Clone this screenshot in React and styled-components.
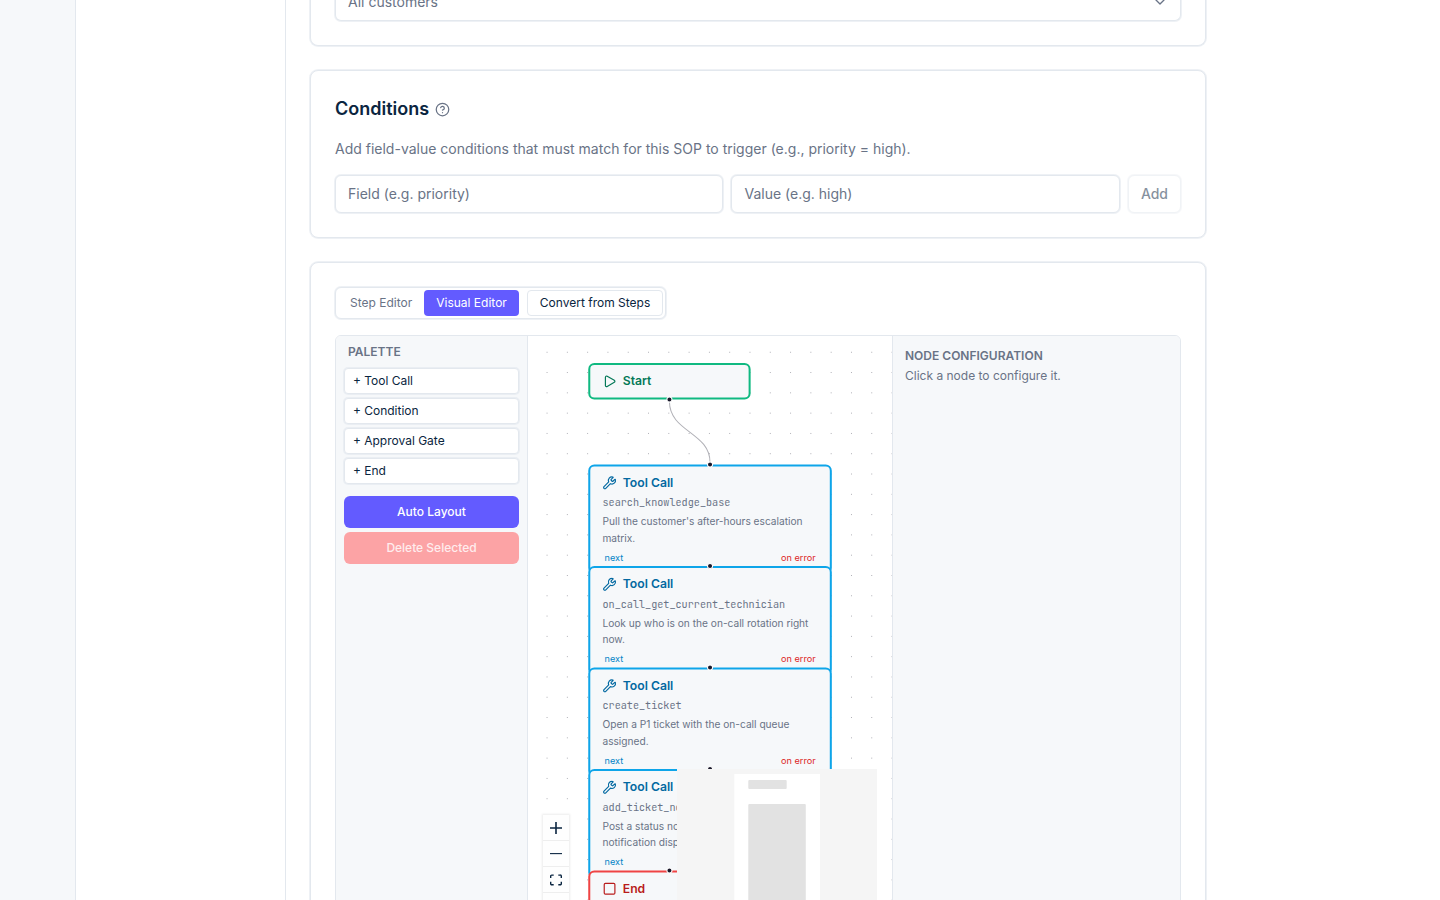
import React from "react";
import styled, { createGlobalStyle } from "styled-components";
import { ChevronDown, CircleHelp, Play, Square, Wrench } from "lucide-react";

const Global = createGlobalStyle`
  * { box-sizing: border-box; }
  html, body { margin: 0; height: 100%; overflow: hidden; }
  body {
    background: #fff;
    color: #0a2540;
    font-family: Inter, "Liberation Sans", sans-serif;
    font-size: 14px;
    line-height: 20px;
  }
`;

const Page = styled.div`
  display: flex;
  height: 900px;
  overflow: hidden;
`;

const Rail = styled.aside`
  flex: none;
  width: 76px;
  background: #f6f8fa;
  border-right: 1px solid #e3e8ee;
`;

const SubNav = styled.nav`
  flex: none;
  width: 210px;
  border-right: 1px solid #e3e8ee;
`;

const Main = styled.main`
  display: flex;
  flex-direction: column;
  justify-content: flex-start;
  gap: 24px;
  width: 944px;
  height: 900px;
  padding: 0 24px;
  overflow: hidden;
`;

const ring = "box-shadow: 0 0 0 1px rgba(227, 232, 238, 0.6);";

const Card = styled.section`
  flex: none;
  height: ${(p) => p.$height}px;
  padding: 24px;
  background: #fff;
  border: 1px solid #e3e8ee;
  border-radius: 8px;
  ${ring}
`;

const AudienceCard = styled(Card)`
  display: flex;
  flex-direction: column;
  justify-content: flex-end;
  height: 46px;
  border-top: 0;
  border-radius: 0 0 8px 8px;
  padding-top: 0;
`;

const control = `
  background: #fff;
  border: 1px solid #e3e8ee;
  border-radius: 6px;
  ${ring}
`;

const Select = styled.div`
  ${control}
  display: flex;
  align-items: flex-end;
  justify-content: space-between;
  height: 21px;
  padding: 0 12px 8px;
  border-top: 0;
  border-radius: 0 0 6px 6px;
  color: #697386;
  svg { display: block; margin: 0 0 2px; }
`;

const Title = styled.h2`
  display: flex;
  align-items: center;
  gap: 6px;
  margin: 0 0 16px;
  font-size: 18px;
  line-height: 28px;
  font-weight: 600;
  svg { color: #697386; }
`;

const Hint = styled.p`
  margin: 0 0 16px;
  color: #697386;
`;

const FieldRow = styled.div`
  display: flex;
  gap: 8px;
`;

const Input = styled.div`
  ${control}
  flex: 1;
  height: 38px;
  padding: 8px 12px;
  color: #697386;
`;

const AddButton = styled.button`
  ${control}
  width: 53.1px;
  height: 38px;
  padding: 0;
  color: #0a2540;
  font: 500 14px/20px Inter, sans-serif;
  opacity: 0.5;
`;

const Tabs = styled.div`
  ${control}
  display: inline-flex;
  height: 32px;
  padding: 2px;
  margin-bottom: 16px;
`;

const Tab = styled.button`
  height: 26px;
  padding: 0 12px;
  border: 0;
  border-radius: 4px;
  background: ${(p) => (p.$active ? "#635bff" : "transparent")};
  color: ${(p) => (p.$active ? "#fff" : "#697386")};
  font: 400 12px/16px Inter, sans-serif;
`;

const ConvertButton = styled(Tab)`
  margin-left: 8px;
  border: 1px solid #e3e8ee;
  color: #0a2540;
`;

const Editor = styled.div`
  display: flex;
  width: 846px;
  height: 620px;
  border: 1px solid #e3e8ee;
  border-radius: 6px;
  overflow: hidden;
`;

const Palette = styled.div`
  display: flex;
  flex-direction: column;
  gap: 4px;
  width: 192px;
  padding: 8px;
  background: #f6f8fa;
  border-right: 1px solid #e3e8ee;
`;

const PanelTitle = styled.div`
  color: #697386;
  font-size: 12px;
  line-height: 16px;
  font-weight: 600;
`;

const PaletteTitle = styled(PanelTitle)`
  padding: 0 4px;
  margin-bottom: 4px;
`;

const PaletteItem = styled.button`
  ${control}
  height: 26px;
  padding: 0 7.9px;
  border-radius: 4px;
  color: #0a2540;
  text-align: left;
  font: 400 12px/16px Inter, sans-serif;
`;

const ActionButton = styled.button`
  height: 32px;
  margin-top: ${(p) => (p.$danger ? 0 : 8)}px;
  border: 0;
  border-radius: 6px;
  background: ${(p) => (p.$danger ? "#fca3a5" : "#635bff")};
  color: ${(p) => (p.$danger ? "#ffedee" : "#fff")};
  font: 500 12px/16px Inter, sans-serif;
`;

const Canvas = styled.div`
  position: relative;
  flex: 1;
  overflow: hidden;
  background: #fff;
`;

const Dots = styled.svg`
  position: absolute;
  inset: 0;
  width: 100%;
  height: 100%;
`;

const Viewport = styled.div`
  position: absolute;
  left: 0;
  top: 0;
  transform: translate(60.25px, 27.05px) scale(1.0149);
  transform-origin: 0 0;
`;

const Edge = styled.svg`
  position: absolute;
  left: 0;
  top: 0;
  overflow: visible;
`;

const tones = {
  start: { line: "#10b981", text: "#047857" },
  tool: { line: "#0ea5e9", text: "#0369a1" },
  end: { line: "#ef4444", text: "#b91c1c" },
};

const Node = styled.div`
  position: absolute;
  left: 0;
  top: ${(p) => p.$y}px;
  width: ${(p) => (p.$tone === "tool" ? 240 : 160)}px;
  padding: 8px 12px;
  background: #f6f8fa;
  border: 2px solid ${(p) => tones[p.$tone].line};
  border-radius: 6px;
`;

const NodeHead = styled.div`
  display: flex;
  align-items: center;
  gap: 6px;
  color: ${(p) => tones[p.$tone].text};
  font-size: 12px;
  line-height: 16px;
  font-weight: 600;
`;

const ToolName = styled.div`
  margin-top: 4px;
  color: #697386;
  font: 400 10px/16px "JetBrains Mono", "DejaVu Sans Mono", monospace;
`;

const Note = styled.div`
  margin-top: 2px;
  color: #697386;
  font-size: 10px;
  line-height: 16.25px;
`;

const Outputs = styled.div`
  display: flex;
  justify-content: space-between;
  margin-top: 4px;
  padding: 0 2px;
  color: #0284c7;
  font-size: 9px;
  line-height: 13.5px;
  span + span { color: #dc2626; }
`;

const Handle = styled.i`
  position: absolute;
  left: 50%;
  ${(p) => p.$side}: -5px;
  width: 6px;
  height: 6px;
  margin-left: -3px;
  background: #1a192b;
  border: 1px solid #fff;
  border-radius: 50%;
`;

const Controls = styled.div`
  position: absolute;
  left: 15px;
  top: 479px;
  width: 26px;
  box-shadow: 0 0 2px 1px rgba(0, 0, 0, 0.08);
`;

const ControlButton = styled.div`
  display: flex;
  align-items: center;
  justify-content: center;
  height: 26px;
  background: #fefefe;
  border-bottom: 1px solid #eee;
  svg { width: 12px; height: 12px; fill: #0a2540; }
`;

const MiniMap = styled.svg`
  position: absolute;
  left: 149px;
  top: 433px;
  width: 200px;
  height: 150px;
  background: #f5f5f5;
`;

const Config = styled.div`
  display: flex;
  flex-direction: column;
  gap: 4px;
  width: 288px;
  padding: 12px;
  background: #f6f8fa;
  border-left: 1px solid #e3e8ee;
  color: #697386;
  font-size: 12px;
  line-height: 16px;
`;

const steps = [
  ["search_knowledge_base", "Pull the customer's after-hours escalation matrix."],
  ["on_call_get_current_technician", "Look up who is on the on-call rotation right now."],
  ["create_ticket", "Open a P1 ticket with the on-call queue assigned."],
  ["add_ticket_note", "Post a status note confirming that the notification dispatched."],
];

function ToolNode({ y, name, note }) {
  return (
    <Node $tone="tool" $y={y}>
      <NodeHead $tone="tool"><Wrench size={14} />Tool Call</NodeHead>
      <ToolName>{name}</ToolName>
      <Note>{note}</Note>
      <Outputs><span>next</span><span>on error</span></Outputs>
      <Handle $side="top" />
    </Node>
  );
}

export default function App() {
  return (
    <Page>
      <Global />
      <Rail />
      <SubNav />
      <Main>
        <AudienceCard>
          <Select>All customers<ChevronDown size={16} /></Select>
        </AudienceCard>
        <Card $height={168}>
          <Title>Conditions <CircleHelp size={15} /></Title>
          <Hint>Add field-value conditions that must match for this SOP to trigger (e.g., priority = high).</Hint>
          <FieldRow>
            <Input>Field (e.g. priority)</Input>
            <Input>Value (e.g. high)</Input>
            <AddButton>Add</AddButton>
          </FieldRow>
        </Card>
        <Card $height={720}>
          <Tabs>
            <Tab>Step Editor</Tab>
            <Tab $active>Visual Editor</Tab>
            <ConvertButton>Convert from Steps</ConvertButton>
          </Tabs>
          <Editor>
            <Palette>
              <PaletteTitle>PALETTE</PaletteTitle>
              <PaletteItem>+ Tool Call</PaletteItem>
              <PaletteItem>+ Condition</PaletteItem>
              <PaletteItem>+ Approval Gate</PaletteItem>
              <PaletteItem>+ End</PaletteItem>
              <ActionButton>Auto Layout</ActionButton>
              <ActionButton $danger>Delete Selected</ActionButton>
            </Palette>
            <Canvas>
              <Dots>
                <defs>
                  <pattern id="grid" x="8.9" y="6.1" width="20.294" height="20.294" patternUnits="userSpaceOnUse">
                    <circle cx="10.147" cy="10.147" r="0.507" fill="#91919a" />
                  </pattern>
                </defs>
                <rect width="100%" height="100%" fill="url(#grid)" />
              </Dots>
              <Viewport>
                <Edge width="1" height="1">
                  <path d="M80 38C80 68 120 68 120 98" fill="none" stroke="#b1b1b7" />
                </Edge>
                <Node $tone="start" $y={0}>
                  <NodeHead $tone="start"><Play size={14} />Start</NodeHead>
                  <Handle $side="bottom" />
                </Node>
                {steps.map(([name, note], i) => (
                  <ToolNode key={name} y={100 + i * 100} name={name} note={note} />
                ))}
                <Node $tone="end" $y={500}>
                  <NodeHead $tone="end"><Square size={14} />End</NodeHead>
                  <Handle $side="top" />
                </Node>
              </Viewport>
              <Controls>
                <ControlButton>
                  <svg viewBox="0 0 32 32"><path d="M32 18.133H18.133V32h-4.266V18.133H0v-4.266h13.867V0h4.266v13.867H32z" /></svg>
                </ControlButton>
                <ControlButton>
                  <svg viewBox="0 0 32 5"><path d="M0 0h32v2.9H0z" /></svg>
                </ControlButton>
                <ControlButton>
                  <svg viewBox="0 0 32 30"><path d="M3.692 4.63c0-.53.4-.938.939-.938h5.215V0H4.708C2.13 0 0 2.054 0 4.63v5.216h3.692V4.631zM27.354 0h-5.2v3.692h5.17c.53 0 .984.4.984.939v5.215H32V4.631A4.624 4.624 0 0027.354 0zm.954 24.83c0 .532-.4.94-.939.94h-5.215v3.768h5.215c2.577 0 4.631-2.13 4.631-4.707v-5.139h-3.692v5.139zm-23.677.94c-.531 0-.939-.4-.939-.94v-5.138H0v5.139c0 2.577 2.13 4.707 4.708 4.707h5.138V25.77H4.631z" /></svg>
                </ControlButton>
                <ControlButton />
              </Controls>
              <MiniMap>
                <rect x="57.3" y="5" width="85.7" height="145" fill="#fff" />
                <rect x="71.3" y="11" width="38.4" height="9" rx="1" fill="#e2e2e2" />
                <rect x="71.3" y="35" width="57.5" height="115" rx="1" fill="#e2e2e2" />
              </MiniMap>
            </Canvas>
            <Config>
              <PanelTitle>NODE CONFIGURATION</PanelTitle>
              <span>Click a node to configure it.</span>
            </Config>
          </Editor>
        </Card>
      </Main>
    </Page>
  );
}
